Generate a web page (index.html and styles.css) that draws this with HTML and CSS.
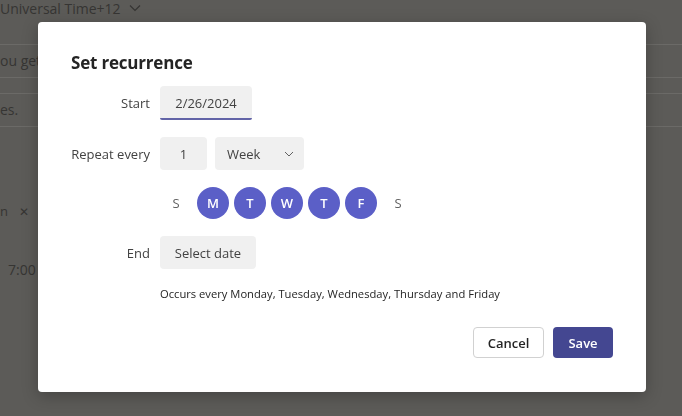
FILE: index.html
```html
<!DOCTYPE html>
<html lang="en">
<head>
  <meta charset="UTF-8">
  <title>Set recurrence</title>
  <link rel="stylesheet" href="styles.css">
</head>
<body>

  <!-- PAGE BEHIND THE DIALOG (dimmed) -->
  <div class="page">
    <div class="tz">Universal Time+12
      <svg width="12" height="8" viewBox="0 0 12 8"><path d="M1 1.5l5 5 5-5" fill="none" stroke="currentColor" stroke-width="1.2"/></svg>
    </div>
    <div class="field">ou get</div>
    <div class="field gap">es.</div>
    <div class="tag">n <span class="x">&#x2715;</span></div>
    <div class="time">7:00</div>
  </div>

  <!-- DIALOG OVERLAY -->
  <div class="overlay">
    <div class="dialog">
      <h2>Set recurrence</h2>

      <div class="form">
        <div class="label">Start</div>
        <div class="row">
          <div class="box date">2/26/2024</div>
        </div>

        <div class="label">Repeat every</div>
        <div class="row">
          <div class="box num">1</div>
          <div class="box select">Week
            <svg width="10" height="6" viewBox="0 0 10 6"><path d="M1 1l4 4 4-4" fill="none" stroke="#616161" stroke-width="1"/></svg>
          </div>
        </div>

        <div class="label"></div>
        <div class="row days">
          <span class="day">S</span>
          <span class="day on">M</span>
          <span class="day on">T</span>
          <span class="day on">W</span>
          <span class="day on">T</span>
          <span class="day on">F</span>
          <span class="day">S</span>
        </div>

        <div class="label">End</div>
        <div class="row">
          <div class="box end">Select date</div>
        </div>

        <div class="label"></div>
        <div class="summary">Occurs every Monday, Tuesday, Wednesday, Thursday and Friday</div>
      </div>

      <div class="actions">
        <button class="btn cancel">Cancel</button>
        <button class="btn save">Save</button>
      </div>
    </div>
  </div>

</body>
</html>
```

FILE: styles.css
```css
/* Teams-like recurrence dialog over a dimmed page */
body {
  margin: 0;
  width: 682px;
  height: 416px;
  overflow: hidden;
  background: #5c5b58;
  font-family: 'Open Sans', 'Noto Sans', sans-serif;
  color: #242424;
}

/* Dimmed page content */
.page {
  color: #363533;
  font-size: 14px;
}

.tz {
  display: flex;
  align-items: center;
  gap: 8px;
  height: 20px;
  margin-top: -2px;
}

.field {
  height: 32px;
  line-height: 32px;
  border-top: 1px solid #6b6a67;
  border-bottom: 1px solid #6b6a67;
  margin-top: 26px;
}
.field.gap {
  margin-top: 15px;
}

.tag {
  margin-top: 75px;
  font-size: 13px;
}
.tag .x {
  margin-left: 8px;
  font-size: 12px;
}

.time {
  margin-top: 40px;
  margin-left: 8px;
}

/* Overlay + dialog */
.overlay {
  position: fixed;
  inset: 0;
  display: flex;
  align-items: center;
  justify-content: center;
}

.dialog {
  box-sizing: border-box;
  width: 608px;
  height: 370px;
  margin-left: 2px;
  margin-top: -2px;
  background: #ffffff;
  border-radius: 4px;
  box-shadow: 0 4px 16px rgba(0, 0, 0, 0.25);
  padding: 29px 33px 34px 33px;
  display: flex;
  flex-direction: column;
}

.dialog h2 {
  margin: 0 0 12px 0;
  font-size: 17px;
  font-weight: 700;
  letter-spacing: -0.2px;
}

/* Label / control grid */
.form {
  display: grid;
  grid-template-columns: 79px auto;
  column-gap: 10px;
  row-gap: 17px;
  align-items: center;
  font-size: 13px;
}

.label {
  text-align: right;
  color: #424242;
}

.row {
  display: flex;
  gap: 8px;
  align-items: center;
}

.box {
  box-sizing: border-box;
  height: 33px;
  background: #f0f0f0;
  border-radius: 4px;
  display: flex;
  align-items: center;
  color: #424242;
}

.date {
  width: 92px;
  height: 34px;
  justify-content: center;
  border-bottom: 2px solid #6264a7;
  border-radius: 4px 4px 2px 2px;
  padding-top: 1px;
}

.num {
  width: 47px;
  justify-content: center;
}

.select {
  width: 89px;
  padding: 0 10px 0 12px;
  justify-content: space-between;
}

.end {
  width: 96px;
  justify-content: center;
}

/* Weekday toggles */
.days {
  gap: 5px;
}
.day {
  width: 32px;
  height: 32px;
  border-radius: 50%;
  display: flex;
  align-items: center;
  justify-content: center;
  font-size: 13px;
  color: #616161;
}
.day.on {
  background: #5b5fc7;
  color: #ffffff;
  font-weight: 600;
}

.summary {
  font-size: 11.2px;
  color: #242424;
  margin-top: 0;
}

/* Footer buttons */
.actions {
  margin-top: auto;
  display: flex;
  justify-content: flex-end;
  gap: 9px;
}

.btn {
  box-sizing: border-box;
  height: 31px;
  border-radius: 4px;
  font-family: inherit;
  font-size: 13px;
  font-weight: 600;
  cursor: pointer;
}
.cancel {
  width: 71px;
  background: #ffffff;
  border: 1px solid #d1d1d1;
  color: #242424;
}
.save {
  width: 60px;
  background: #444791;
  border: none;
  color: #ffffff;
}
```
